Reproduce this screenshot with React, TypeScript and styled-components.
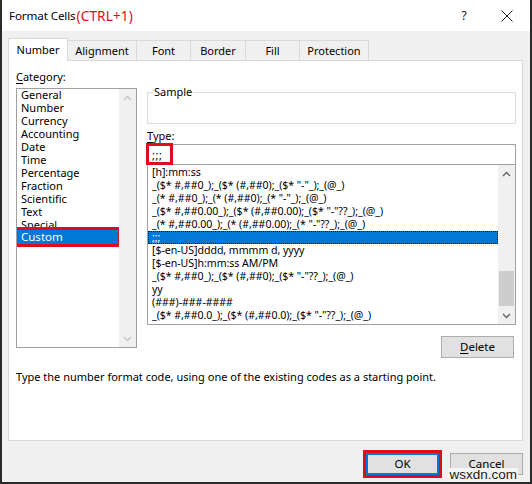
import React from 'react';
import styled, { createGlobalStyle, css } from 'styled-components';

const Global = createGlobalStyle`
  html, body { margin: 0; padding: 0; background: #ffffff; }
  body { font-family: "Noto Sans", "Open Sans", sans-serif; font-size: 11px; color: #000; }
  * { box-sizing: border-box; }
`;

const RED = '#e00b1c';
const BLUE = '#0078d7';

const Dialog = styled.div`
  width: 532px;
  height: 484px;
  display: flex;
  flex-direction: column;
  background: #f0f0f0;
  border-left: 2px solid #2b2b2b;
  border-right: 2px solid #2b2b2b;
  border-bottom: 2px solid #2b2b2b;
  overflow: hidden;
`;

const TitleBar = styled.div`
  height: 31px;
  flex: none;
  background: #ffffff;
  display: flex;
  align-items: center;
  padding-left: 7px;
`;

const TitleText = styled.span`
  font-size: 11.6px;
  letter-spacing: -0.1px;
`;

const TitleHint = styled.span`
  font-size: 13.6px;
  color: ${RED};
  letter-spacing: 0.1px;
  margin-left: 1px;
`;

const TitleSpacer = styled.div`
  flex: 1;
`;

const HelpGlyph = styled.span`
  font-size: 12px;
  width: 12px;
  text-align: center;
  margin-right: 31px;
  color: #222;
`;

const CloseIcon = styled.svg`
  width: 12px;
  height: 12px;
  margin-right: 17px;
`;

const Body = styled.div`
  flex: 1;
  display: flex;
  flex-direction: column;
  padding: 7px 7px 0 6px;
`;

const TabStrip = styled.div`
  display: flex;
  align-items: flex-end;
  height: 22px;
`;

const Tab = styled.div<{ $active?: boolean; $w: number }>`
  width: ${(p) => p.$w}px;
  height: 20px;
  border: 1px solid #d9d9d9;
  border-bottom: none;
  margin-left: -1px;
  display: flex;
  align-items: center;
  justify-content: center;
  background: #f0f0f0;
  &:first-child { margin-left: 0; }
  ${(p) =>
    p.$active &&
    css`
      height: 23px;
      background: #ffffff;
      margin-bottom: -1px;
      position: relative;
      z-index: 1;
      padding-bottom: 2px;
    `}
`;

const Panel = styled.div`
  height: 381px;
  background: #ffffff;
  border: 1px solid #d9d9d9;
  padding: 9px 6px 0 7px;
  display: flex;
  flex-direction: column;
`;

const Columns = styled.div`
  display: grid;
  grid-template-columns: 121px 369px;
  column-gap: 10px;
  align-items: start;
`;

const LeftCol = styled.div`
  display: flex;
  flex-direction: column;
`;

const RightCol = styled.div`
  display: flex;
  flex-direction: column;
`;

const FieldLabel = styled.div<{ $top?: number; $bottom?: number }>`
  line-height: 14px;
  height: 14px;
  margin-top: ${(p) => p.$top ?? 0}px;
  margin-bottom: ${(p) => p.$bottom ?? 0}px;
  u { text-decoration: underline; text-underline-offset: 2px; }
`;

const ListBox = styled.div<{ $h: number }>`
  height: ${(p) => p.$h}px;
  border: 1px solid #a0a0a0;
  background: #ffffff;
  display: flex;
  overflow: hidden;
`;

const ItemColumn = styled.div<{ $shift?: number }>`
  flex: 1;
  min-width: 0;
  display: flex;
  flex-direction: column;
  margin-top: ${(p) => p.$shift ?? 0}px;
`;

const CategoryItem = styled.div<{ $selected?: boolean }>`
  height: 13px;
  line-height: 13px;
  padding-left: 4px;
  font-size: 11px;
  white-space: nowrap;
  ${(p) =>
    p.$selected &&
    css`
      background: ${BLUE};
      color: #ffffff;
      outline: 3px solid ${RED};
      outline-offset: 0px;
      height: 14px;
      line-height: 14px;
      margin-top: -1px;
      margin-right: 1px;
      font-size: 11.5px;
    `}
`;

const FormatItem = styled.div<{ $selected?: boolean }>`
  height: 13px;
  line-height: 13px;
  padding-left: 4px;
  font-size: 10.6px;
  letter-spacing: -0.05px;
  white-space: nowrap;
  ${(p) =>
    p.$selected &&
    css`
      background: ${BLUE};
      color: #ffffff;
      outline: 1px dotted #1a1a1a;
      outline-offset: -1px;
    `}
`;

const ScrollBar = styled.div`
  width: 17px;
  flex: none;
  background: #f0f0f0;
  display: flex;
  flex-direction: column;
`;

const ScrollButton = styled.div`
  height: 17px;
  flex: none;
  display: flex;
  align-items: center;
  justify-content: center;
`;

const ScrollTrack = styled.div`
  flex: 1;
  display: flex;
  flex-direction: column;
  justify-content: flex-end;
`;

const ScrollThumb = styled.div`
  height: 35px;
  margin: 0 1px 1px 1px;
  background: #cdcdcd;
`;

const SampleBox = styled.div`
  margin-top: 22px;
  height: 32px;
  border: 1px solid #dcdcdc;
  position: relative;
`;

const SampleLegend = styled.span`
  position: absolute;
  top: -8px;
  left: 5px;
  padding: 0 1px;
  background: #ffffff;
  line-height: 14px;
`;

const TypeInput = styled.div`
  margin-top: 1px;
  height: 21px;
  border: 1px solid #a0a0a0;
  background: #ffffff;
  display: flex;
  align-items: center;
  padding-left: 4px;
  position: relative;
  font-size: 11px;
  letter-spacing: 0.5px;
`;

const Callout = styled.div<{ $w: number; $h: number }>`
  position: absolute;
  left: -2px;
  top: -2px;
  width: ${(p) => p.$w}px;
  height: ${(p) => p.$h}px;
  border: 3px solid ${RED};
  pointer-events: none;
`;

const FormatList = styled(ListBox)`
  margin-top: -1px;
`;

const ActionRow = styled.div`
  display: flex;
  justify-content: flex-end;
  margin-top: 11px;
  padding-right: 2px;
`;

const Button = styled.button<{ $default?: boolean; $w: number }>`
  width: ${(p) => p.$w}px;
  height: 22px;
  background: #e1e1e1;
  border: 1px solid #adadad;
  font-family: "Noto Sans", "Open Sans", sans-serif;
  font-size: 11.5px;
  color: #000;
  padding: 0 0 1px 0;
  display: flex;
  align-items: center;
  justify-content: center;
  u { text-decoration: underline; text-underline-offset: 2px; }
  ${(p) =>
    p.$default &&
    css`
      border: 1px solid ${BLUE};
      box-shadow: inset 0 0 0 1px ${BLUE};
      outline: 3px solid ${RED};
      outline-offset: 0px;
    `}
`;

const Description = styled.div`
  margin-top: 12px;
  line-height: 14px;
  font-size: 11px;
`;

const Footer = styled.div`
  display: flex;
  justify-content: flex-end;
  gap: 11px;
  padding-top: 12px;
  position: relative;
`;

const Watermark = styled.span`
  position: absolute;
  right: 5px;
  top: 27px;
  font-family: "Liberation Sans", Arial, sans-serif;
  font-size: 13.5px;
  line-height: 13px;
  color: #1a1a1a;
  background: #f4f4f4;
  padding: 0 1px;
`;

const Chevron = ({ up, color }: { up?: boolean; color: string }) => (
  <svg width="9" height="6" viewBox="0 0 9 6">
    <polyline
      points={up ? '1,5 4.5,1.5 8,5' : '1,1 4.5,4.5 8,1'}
      fill="none"
      stroke={color}
      strokeWidth="1.3"
    />
  </svg>
);

const categories = [
  'General',
  'Number',
  'Currency',
  'Accounting',
  'Date',
  'Time',
  'Percentage',
  'Fraction',
  'Scientific',
  'Text',
  'Special',
  'Custom',
];

const formats = [
  '[h]:mm:ss',
  '_($* #,##0_);_($* (#,##0);_($* "-"_);_(@_)',
  '_(* #,##0_);_(* (#,##0);_(* "-"_);_(@_)',
  '_($* #,##0.00_);_($* (#,##0.00);_($* "-"??_);_(@_)',
  '_(* #,##0.00_);_(* (#,##0.00);_(* "-"??_);_(@_)',
  ';;;',
  '[$-en-US]dddd, mmmm d, yyyy',
  '[$-en-US]h:mm:ss AM/PM',
  '_($* #,##0_);_($* (#,##0);_($* "-"??_);_(@_)',
  'yy',
  '(###)-###-####',
  '_($* #,##0.0_);_($* (#,##0.0);_($* "-"??_);_(@_)',
];

const tabs: [string, number][] = [
  ['Number', 60],
  ['Alignment', 70],
  ['Font', 55],
  ['Border', 56],
  ['Fill', 55],
  ['Protection', 70],
];

export default function App() {
  return (
    <>
      <Global />
      <Dialog>
        <TitleBar>
          <TitleText>Format Cells</TitleText>
          <TitleHint>(CTRL+1)</TitleHint>
          <TitleSpacer />
          <HelpGlyph>?</HelpGlyph>
          <CloseIcon viewBox="0 0 12 12">
            <path d="M0.5 0.5 L11.5 11.5 M11.5 0.5 L0.5 11.5" stroke="#222" strokeWidth="1" fill="none" />
          </CloseIcon>
        </TitleBar>
        <Body>
          <TabStrip>
            {tabs.map(([name, w], i) => (
              <Tab key={name} $w={w} $active={i === 0}>
                {name}
              </Tab>
            ))}
          </TabStrip>
          <Panel>
            <Columns>
              <LeftCol>
                <FieldLabel $bottom={4}>
                  <u>C</u>ategory:
                </FieldLabel>
                <ListBox $h={260}>
                  <ItemColumn $shift={-1}>
                    {categories.map((c) => (
                      <CategoryItem key={c} $selected={c === 'Custom'}>
                        {c}
                      </CategoryItem>
                    ))}
                  </ItemColumn>
                  <ScrollBar>
                    <ScrollButton>
                      <Chevron up color="#c2c2c2" />
                    </ScrollButton>
                    <ScrollTrack />
                    <ScrollButton>
                      <Chevron color="#c2c2c2" />
                    </ScrollButton>
                  </ScrollBar>
                </ListBox>
              </LeftCol>
              <RightCol>
                <SampleBox>
                  <SampleLegend>Sample</SampleLegend>
                </SampleBox>
                <FieldLabel $top={5}>
                  <u>T</u>ype:
                </FieldLabel>
                <TypeInput>
                  ;;;
                  <Callout $w={27} $h={22} />
                </TypeInput>
                <FormatList $h={161}>
                  <ItemColumn $shift={1}>
                    {formats.map((f, i) => (
                      <FormatItem key={i} $selected={i === 5}>
                        {f}
                      </FormatItem>
                    ))}
                  </ItemColumn>
                  <ScrollBar>
                    <ScrollButton>
                      <Chevron up color="#606060" />
                    </ScrollButton>
                    <ScrollTrack>
                      <ScrollThumb />
                    </ScrollTrack>
                    <ScrollButton>
                      <Chevron color="#606060" />
                    </ScrollButton>
                  </ScrollBar>
                </FormatList>
                <ActionRow>
                  <Button $w={73}>
                    <u>D</u>elete
                  </Button>
                </ActionRow>
              </RightCol>
            </Columns>
            <Description>
              Type the number format code, using one of the existing codes as a starting point.
            </Description>
          </Panel>
          <Footer>
            <Button $w={73} $default>
              OK
            </Button>
            <Button $w={73}>Cancel</Button>
            <Watermark>wsxdn.com</Watermark>
          </Footer>
        </Body>
      </Dialog>
    </>
  );
}
